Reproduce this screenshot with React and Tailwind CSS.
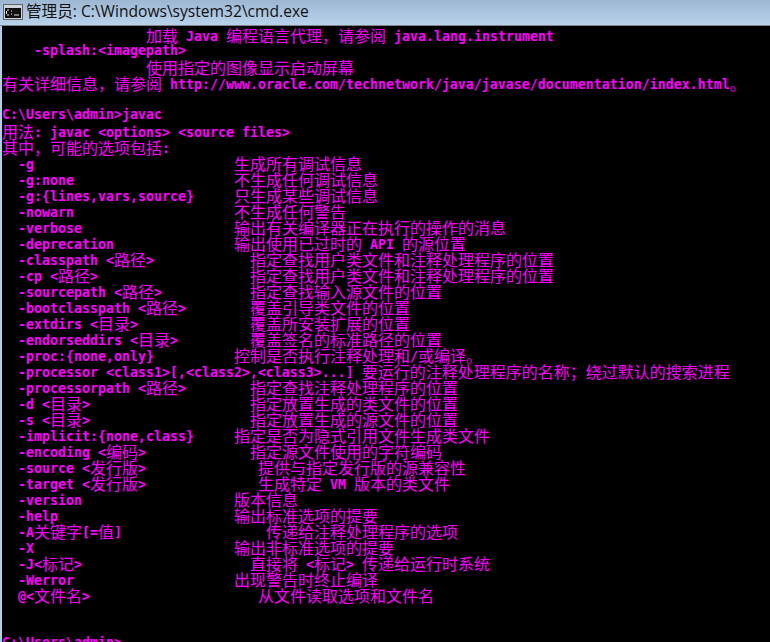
const CJK = /([^\x00-\x7f]+)/;

const width = (text) => [...text].reduce((sum, ch) => sum + (ch.charCodeAt(0) > 127 ? 2 : 1), 0);

const opt = (name, col, desc) => "  " + name + " ".repeat(Math.max(1, col - 2 - width(name))) + desc;

const lines = [
  "                  加载 Java 编程语言代理，请参阅 java.lang.instrument",
  "    -splash:<imagepath>",
  "                  使用指定的图像显示启动屏幕",
  "有关详细信息，请参阅 http://www.oracle.com/technetwork/java/javase/documentation/index.html。",
  "",
  "C:\\Users\\admin>javac",
  "用法: javac <options> <source files>",
  "其中，可能的选项包括:",
  opt("-g", 29, "生成所有调试信息"),
  opt("-g:none", 29, "不生成任何调试信息"),
  opt("-g:{lines,vars,source}", 29, "只生成某些调试信息"),
  opt("-nowarn", 29, "不生成任何警告"),
  opt("-verbose", 29, "输出有关编译器正在执行的操作的消息"),
  opt("-deprecation", 29, "输出使用已过时的 API 的源位置"),
  opt("-classpath <路径>", 31, "指定查找用户类文件和注释处理程序的位置"),
  opt("-cp <路径>", 31, "指定查找用户类文件和注释处理程序的位置"),
  opt("-sourcepath <路径>", 31, "指定查找输入源文件的位置"),
  opt("-bootclasspath <路径>", 31, "覆盖引导类文件的位置"),
  opt("-extdirs <目录>", 31, "覆盖所安装扩展的位置"),
  opt("-endorseddirs <目录>", 31, "覆盖签名的标准路径的位置"),
  opt("-proc:{none,only}", 29, "控制是否执行注释处理和/或编译。"),
  opt("-processor <class1>[,<class2>,<class3>...]", 45, "要运行的注释处理程序的名称；绕过默认的搜索进程"),
  opt("-processorpath <路径>", 31, "指定查找注释处理程序的位置"),
  opt("-d <目录>", 31, "指定放置生成的类文件的位置"),
  opt("-s <目录>", 31, "指定放置生成的源文件的位置"),
  opt("-implicit:{none,class}", 29, "指定是否为隐式引用文件生成类文件"),
  opt("-encoding <编码>", 31, "指定源文件使用的字符编码"),
  opt("-source <发行版>", 32, "提供与指定发行版的源兼容性"),
  opt("-target <发行版>", 32, "生成特定 VM 版本的类文件"),
  opt("-version", 29, "版本信息"),
  opt("-help", 29, "输出标准选项的提要"),
  opt("-A关键字[=值]", 33, "传递给注释处理程序的选项"),
  opt("-X", 29, "输出非标准选项的提要"),
  opt("-J<标记>", 31, "直接将 <标记> 传递给运行时系统"),
  opt("-Werror", 29, "出现警告时终止编译"),
  opt("@<文件名>", 32, "从文件读取选项和文件名"),
  "",
  "",
  "C:\\Users\\admin>",
];

const ConsoleLine = ({ text }) => (
  <div className="h-4 whitespace-pre leading-[14px]">
    {text.split(CJK).map((part, i) =>
      CJK.test(part) ? (
        <span key={i} className="align-[-1px] font-['Noto_Sans_CJK_SC',sans-serif] text-[16px] font-normal">
          {part}
        </span>
      ) : (
        <span key={i}>{part}</span>
      )
    )}
  </div>
);

const CmdIcon = () => (
  <svg width="20" height="16" viewBox="0 0 20 16" className="shrink-0">
    <rect x="0.5" y="0.5" width="19" height="15" fill="#cfd5db" stroke="#5f656b" />
    <rect x="2" y="4" width="16" height="10" fill="#111" />
    <path d="M4 6H6M3.5 7V10M4 11H6M8 7H9M8 10H9M11 11H16" stroke="#e8e8e8" strokeWidth="1" fill="none" />
  </svg>
);

const App = () => {
  return (
    <div className="flex h-[642px] w-[770px] flex-col overflow-hidden bg-[#b4cde6]">
      <div className="flex h-[25px] shrink-0 items-center gap-[3px] bg-gradient-to-b from-[#9db7d3] to-[#b9d2eb] pb-[2px] pl-[3px]">
        <CmdIcon />
        <span className="whitespace-pre font-['Open_Sans','Noto_Sans_CJK_SC',sans-serif] text-[15.6px] text-[#111]">
          管理员: C:\Windows\system32\cmd.exe
        </span>
      </div>
      <div className="h-px shrink-0 bg-[#7f8488]" />
      <div className="ml-[2px] min-h-0 flex-1 overflow-hidden bg-black pt-[2px] font-['DejaVu_Sans_Mono',monospace] text-[13.29px] font-bold text-[#ff00ff]">
        {lines.map((text, i) => (
          <ConsoleLine key={i} text={text} />
        ))}
      </div>
    </div>
  );
};

export default App;
